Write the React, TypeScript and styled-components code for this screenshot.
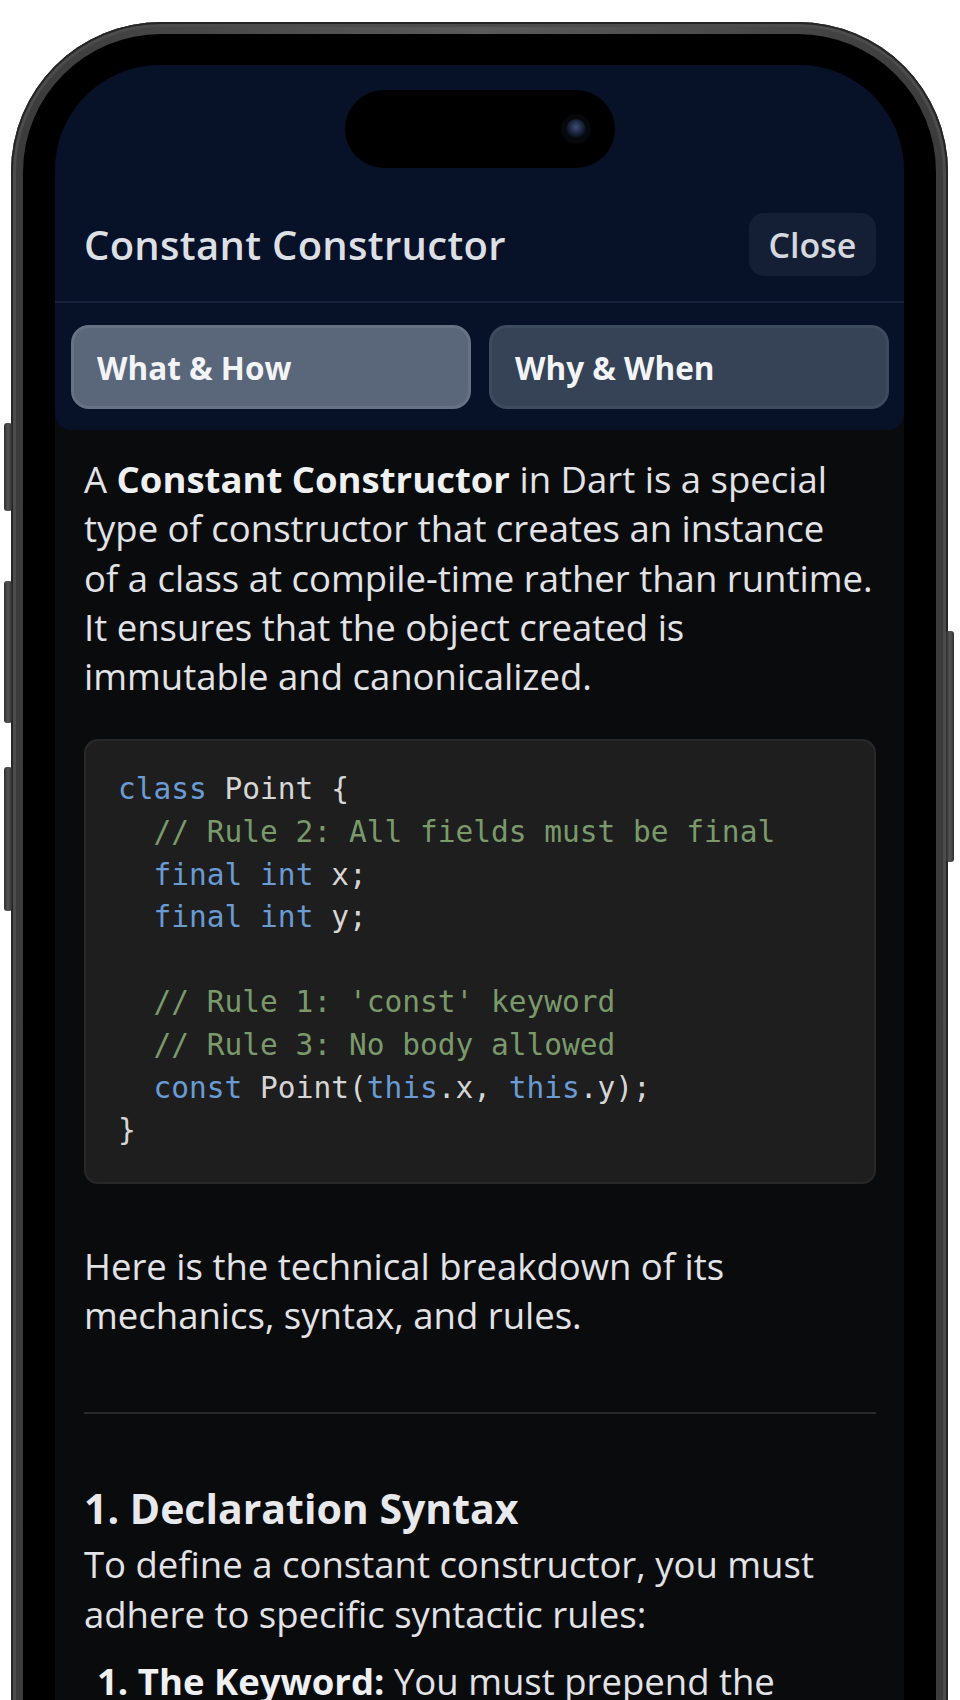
import React from 'react'
import styled, { createGlobalStyle } from 'styled-components'

const GlobalStyle = createGlobalStyle`
  html, body {
    margin: 0;
    padding: 0;
    background: #ffffff;
  }
  body {
    font-family: 'Open Sans', 'Noto Sans', sans-serif;
    -webkit-font-smoothing: antialiased;
  }
  * {
    box-sizing: border-box;
  }
`

const Stage = styled.div`
  width: 960px;
  height: 1700px;
  overflow: hidden;
  padding: 22px 0 0 11px;
  background: #ffffff;
`

const Phone = styled.div`
  position: relative;
  width: 937px;
  height: 1900px;
  padding: 12px;
  border-radius: 150px;
  background: linear-gradient(90deg, #3b3b3b 0%, #5b5b5b 50%, #3b3b3b 100%);
  box-shadow: inset 0 0 0 2px #262626, inset 0 0 0 5px #4c4c4c;
`

const SideButton = styled.div<{ $side: 'left' | 'right'; $top: number; $height: number }>`
  position: absolute;
  top: ${(p) => p.$top}px;
  ${(p) => (p.$side === 'left' ? 'left: -7px;' : 'right: -6px;')}
  width: 8px;
  height: ${(p) => p.$height}px;
  border-radius: 3px;
  background: linear-gradient(90deg, #2f2f2f, #555555 50%, #2f2f2f);
`

const Bezel = styled.div`
  height: 100%;
  padding: 31px 32px 0;
  border-radius: 138px;
  background: #000000;
`

const Screen = styled.div`
  height: 100%;
  border-radius: 105px 105px 0 0;
  background: #0a0b0d;
  overflow: hidden;
`

const Header = styled.header`
  padding-top: 25px;
  background: #071128;
  border-radius: 0 0 16px 16px;
`

const Island = styled.div`
  display: flex;
  align-items: center;
  justify-content: flex-end;
  width: 270px;
  height: 78px;
  margin: 0 auto;
  padding-right: 29px;
  border-radius: 39px;
  background: #000000;
`

const Camera = styled.div`
  width: 20px;
  height: 20px;
  border-radius: 50%;
  background: radial-gradient(circle at 50% 40%, #3d4f78 0%, #18223a 45%, #05070c 75%);
  box-shadow: 0 0 0 5px #07080c;
`

const TitleRow = styled.div`
  display: flex;
  align-items: center;
  justify-content: space-between;
  margin-top: 45px;
  padding: 0 28px 25px 29px;
  border-bottom: 2px solid #18223a;
`

const Title = styled.h1`
  margin: 0;
  font-size: 40px;
  line-height: 50px;
  font-weight: 600;
  letter-spacing: 0.3px;
  color: #dcdfe4;
`

const CloseButton = styled.button`
  width: 127px;
  height: 63px;
  padding: 0;
  border: none;
  border-radius: 15px;
  background: #141e34;
  color: #d5d8de;
  font-family: inherit;
  font-size: 34px;
  font-weight: 600;
`

const Tabs = styled.div`
  display: grid;
  grid-template-columns: 1fr 1fr;
  gap: 18px;
  padding: 22px 15px 21px 16px;
`

const Tab = styled.div<{ $active?: boolean }>`
  display: flex;
  align-items: center;
  height: 84px;
  padding-left: 23px;
  border-radius: 18px;
  border: 3px solid ${(p) => (p.$active ? '#677385' : '#3e4a5e')};
  background: ${(p) => (p.$active ? '#5a6679' : '#364256')};
  color: #f2f4f7;
  font-size: 31.5px;
  font-weight: 700;
`

const Content = styled.main`
  padding: 25px 28px 0 29px;
`

const Paragraph = styled.p<{ $gap?: number }>`
  margin: ${(p) => p.$gap ?? 0}px 0 0;
  font-size: 36.5px;
  line-height: 49.3px;
  color: #e2e3e6;

  strong {
    font-weight: 700;
    color: #eef0f2;
  }
`

const CodeBlock = styled.pre`
  margin: 38px 0 0;
  padding: 27px 32px 30px;
  border: 2px solid #282829;
  border-radius: 14px;
  background: #1e1e1f;
  font-family: 'DejaVu Sans Mono', 'Liberation Mono', monospace;
  font-size: 29.5px;
  line-height: 42.6px;
  color: #d6d6d6;
`

const Keyword = styled.span`
  color: #6a9bd3;
`

const Comment = styled.span`
  color: #7a9a6b;
`

const Rule = styled.hr`
  height: 2px;
  margin: 72px 0 0;
  border: none;
  background: #29292b;
`

const Heading = styled.h2`
  margin: 69px 0 0;
  font-size: 41px;
  line-height: 50px;
  font-weight: 700;
  color: #e8e9ec;
`

const ListItem = styled.p`
  margin: 18px 0 0;
  padding-left: 13px;
  font-size: 36.5px;
  line-height: 49.3px;
  color: #e2e3e6;
  white-space: nowrap;

  strong {
    font-weight: 700;
    color: #eef0f2;
  }
`

const App = (): JSX.Element => {
  return (
    <>
      <GlobalStyle />
      <Stage>
        <Phone>
          <SideButton $side="left" $top={401} $height={88} />
          <SideButton $side="left" $top={559} $height={142} />
          <SideButton $side="left" $top={745} $height={144} />
          <SideButton $side="right" $top={609} $height={231} />
          <Bezel>
            <Screen>
              <Header>
                <Island>
                  <Camera />
                </Island>
                <TitleRow>
                  <Title>Constant Constructor</Title>
                  <CloseButton>Close</CloseButton>
                </TitleRow>
                <Tabs>
                  <Tab $active>What &amp; How</Tab>
                  <Tab>Why &amp; When</Tab>
                </Tabs>
              </Header>

              <Content>
                <Paragraph>
                  A <strong>Constant Constructor</strong> in Dart is a special
                  <br />
                  type of constructor that creates an instance
                  <br />
                  of a class at compile-time rather than runtime.
                  <br />
                  It ensures that the object created is
                  <br />
                  immutable and canonicalized.
                </Paragraph>

                <CodeBlock>
                  <Keyword>class</Keyword> Point {'{'}
                  {'\n  '}
                  <Comment>// Rule 2: All fields must be final</Comment>
                  {'\n  '}
                  <Keyword>final</Keyword> <Keyword>int</Keyword> x;
                  {'\n  '}
                  <Keyword>final</Keyword> <Keyword>int</Keyword> y;
                  {'\n\n  '}
                  <Comment>// Rule 1: 'const' keyword</Comment>
                  {'\n  '}
                  <Comment>// Rule 3: No body allowed</Comment>
                  {'\n  '}
                  <Keyword>const</Keyword> Point(<Keyword>this</Keyword>.x, <Keyword>this</Keyword>.y);
                  {'\n}'}
                </CodeBlock>

                <Paragraph $gap={58}>
                  Here is the technical breakdown of its
                  <br />
                  mechanics, syntax, and rules.
                </Paragraph>

                <Rule />

                <Heading>1. Declaration Syntax</Heading>
                <Paragraph $gap={7}>
                  To define a constant constructor, you must
                  <br />
                  adhere to specific syntactic rules:
                </Paragraph>
                <ListItem>
                  <strong>1. The Keyword:</strong> You must prepend the
                </ListItem>
              </Content>
            </Screen>
          </Bezel>
        </Phone>
      </Stage>
    </>
  )
}

export default App
